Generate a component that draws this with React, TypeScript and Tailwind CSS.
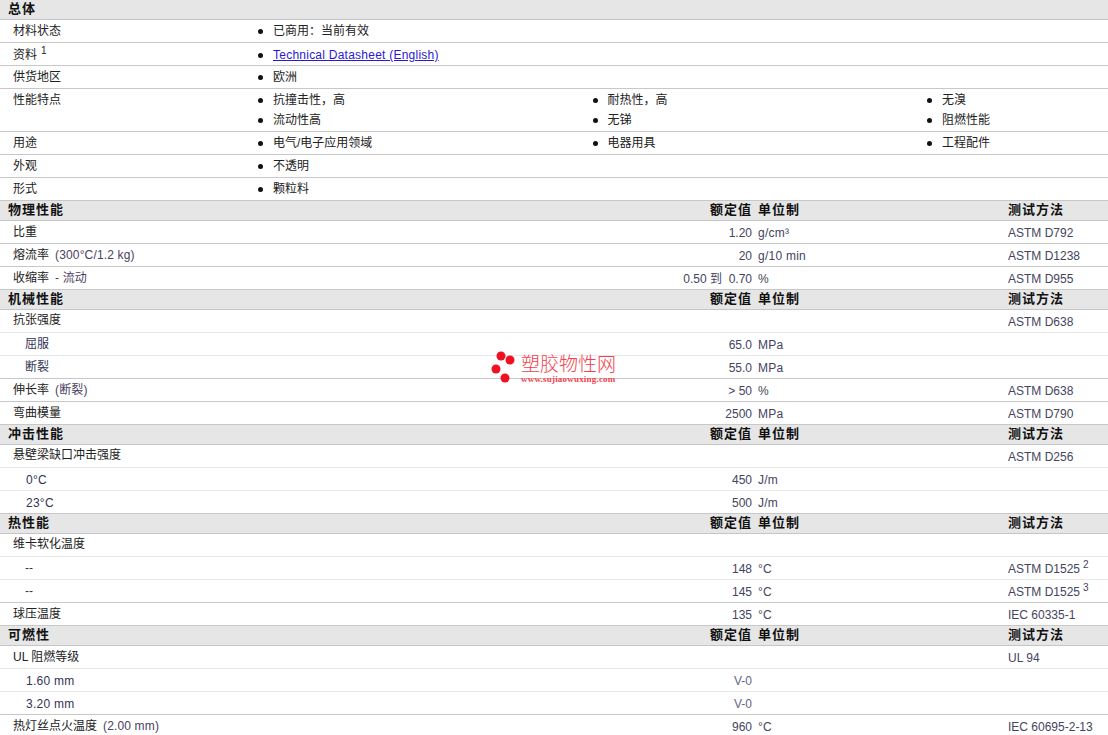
const font = "font-['Liberation_Sans','Noto_Sans_CJK_SC',sans-serif]";

type Row = { label: string; note?: string; value?: string; unit?: string; test?: string; sup?: string; sub?: boolean };

const general: { label: string; sup?: string; items: string[]; link?: boolean }[] = [
  { label: '材料状态', items: ['已商用：当前有效'] },
  { label: '资料', sup: '1', items: ['Technical Datasheet (English)'], link: true },
  { label: '供货地区', items: ['欧洲'] },
  { label: '性能特点', items: ['抗撞击性，高', '耐热性，高', '无溴', '流动性高', '无锑', '阻燃性能'] },
  { label: '用途', items: ['电气/电子应用领域', '电器用具', '工程配件'] },
  { label: '外观', items: ['不透明'] },
  { label: '形式', items: ['颗粒料'] },
];

const sections: { title: string; rows: Row[] }[] = [
  {
    title: '物理性能',
    rows: [
      { label: '比重', value: '1.20', unit: 'g/cm³', test: 'ASTM D792' },
      { label: '熔流率', note: '(300°C/1.2 kg)', value: '20', unit: 'g/10 min', test: 'ASTM D1238' },
      { label: '收缩率', note: '- 流动', value: '0.50 到  0.70', unit: '%', test: 'ASTM D955' },
    ],
  },
  {
    title: '机械性能',
    rows: [
      { label: '抗张强度', test: 'ASTM D638' },
      { label: '屈服', value: '65.0', unit: 'MPa', sub: true },
      { label: '断裂', value: '55.0', unit: 'MPa', sub: true },
      { label: '伸长率', note: '(断裂)', value: '> 50', unit: '%', test: 'ASTM D638' },
      { label: '弯曲模量', value: '2500', unit: 'MPa', test: 'ASTM D790' },
    ],
  },
  {
    title: '冲击性能',
    rows: [
      { label: '悬壁梁缺口冲击强度', test: 'ASTM D256' },
      { label: '0°C', value: '450', unit: 'J/m', sub: true },
      { label: '23°C', value: '500', unit: 'J/m', sub: true },
    ],
  },
  {
    title: '热性能',
    rows: [
      { label: '维卡软化温度' },
      { label: '--', value: '148', unit: '°C', test: 'ASTM D1525', sup: '2', sub: true },
      { label: '--', value: '145', unit: '°C', test: 'ASTM D1525', sup: '3', sub: true },
      { label: '球压温度', value: '135', unit: '°C', test: 'IEC 60335-1' },
    ],
  },
  {
    title: '可燃性',
    rows: [
      { label: 'UL 阻燃等级', test: 'UL 94' },
      { label: '1.60 mm', value: 'V-0', sub: true },
      { label: '3.20 mm', value: 'V-0', sub: true },
      { label: '热灯丝点火温度', note: '(2.00 mm)', value: '960', unit: '°C', test: 'IEC 60695-2-13' },
    ],
  },
];

const SectionHead = ({ title, cols }: { title: string; cols?: boolean }) => (
  <div className="grid h-5 grid-cols-[600px_152px_256px_1fr] items-center border-b border-[#c4c4cc] bg-[#e6e6e6] pb-0.5 text-[13px] font-bold tracking-[1px] text-[#111]">
    <div className="pl-2">{title}</div>
    {cols && (
      <>
        <div className="text-right">额定值</div>
        <div className="pl-1.5">单位制</div>
        <div>测试方法</div>
      </>
    )}
  </div>
);

const GeneralRow = ({ label, sup, items, link }: { label: string; sup?: string; items: string[]; link?: boolean }) => (
  <div className={`flex border-b border-[#c8c8c8] bg-white ${sup ? 'pt-0.5' : 'pt-px'}`}>
    <div className="w-[258px] shrink-0 pl-[13px] leading-[20px] text-[#222]">
      {label}
      {sup && <sup className="ml-1 text-[10px]">{sup}</sup>}
    </div>
    <ul className={`grid w-[850px] grid-cols-[334.5px_334.5px_1fr] ${sup ? '' : 'pb-px'}`}>
      {items.map((item) => (
        <li key={item} className="flex h-5 items-center text-[#222]">
          <span className="mr-[10px] h-[5px] w-[5px] rounded-full bg-[#111]" />
          {link ? <a href="#" className="tracking-[0.24px] text-[#2a18d8] underline">{item}</a> : item}
        </li>
      ))}
    </ul>
  </div>
);

const DataRow = ({ row, light }: { row: Row; light: boolean }) => (
  <div className={`grid h-[23px] grid-cols-[600px_152px_256px_1fr] items-center border-b bg-white ${light ? 'border-[#e8e8ea]' : 'border-[#c8c8c8]'}`}>
    <div className={`${row.sub ? 'pl-[25px] text-[#333355]' : 'pl-[13px] text-[#222]'} ${/^[0-9]/.test(row.label) ? 'translate-x-px pt-0.5 tracking-[0.25px]' : ''} ${!row.value && !row.label.startsWith('UL') ? 'pb-0.5' : ''}`}>
      {row.label}
      {row.note && <span className="ml-1.5 tracking-[0.15px] text-[#4a4060]">{row.note}</span>}
    </div>
    <div className={`whitespace-pre pt-0.5 text-right ${row.value === 'V-0' ? 'text-[#666680]' : 'text-[#444460]'}`}>{row.value}</div>
    <div className="pl-1.5 pt-0.5 tracking-[0.25px] text-[#444460]">{row.unit}</div>
    <div className="pt-0.5 text-[#444460]">
      {row.test}
      {row.sup && <sup className="ml-[3px] text-[10px]">{row.sup}</sup>}
    </div>
  </div>
);

const Watermark = () => (
  <div className="pointer-events-none absolute left-[491px] top-[350px] flex items-start gap-[6px]">
    <svg width="24" height="36" viewBox="0 0 24 36">
      <circle cx="10" cy="6" r="4.5" fill="#f01020" />
      <circle cx="19" cy="10" r="4.5" fill="#f01020" />
      <circle cx="5" cy="19" r="4.5" fill="#f01020" />
      <circle cx="14" cy="28" r="4.5" fill="#f01020" />
    </svg>
    <div className="pt-1 text-[#f4404c]">
      <div className="text-[19px] font-light leading-[21px]">塑胶物性网</div>
      <div className="font-['Liberation_Serif',serif] text-[9px] font-bold leading-[9px] tracking-[0.2px]">www.sujiaowuxing.com</div>
    </div>
  </div>
);

export default function App() {
  return (
    <div className={`relative h-[735px] w-[1108px] overflow-hidden bg-white text-xs ${font}`}>
      <SectionHead title="总体" />
      {general.map((g) => (
        <GeneralRow key={g.label} {...g} />
      ))}
      {sections.map((s) => (
        <section key={s.title}>
          <SectionHead title={s.title} cols />
          {s.rows.map((row, i) => (
            <DataRow key={row.label + i} row={row} light={!!s.rows[i + 1]?.sub} />
          ))}
        </section>
      ))}
      <Watermark />
    </div>
  );
}
